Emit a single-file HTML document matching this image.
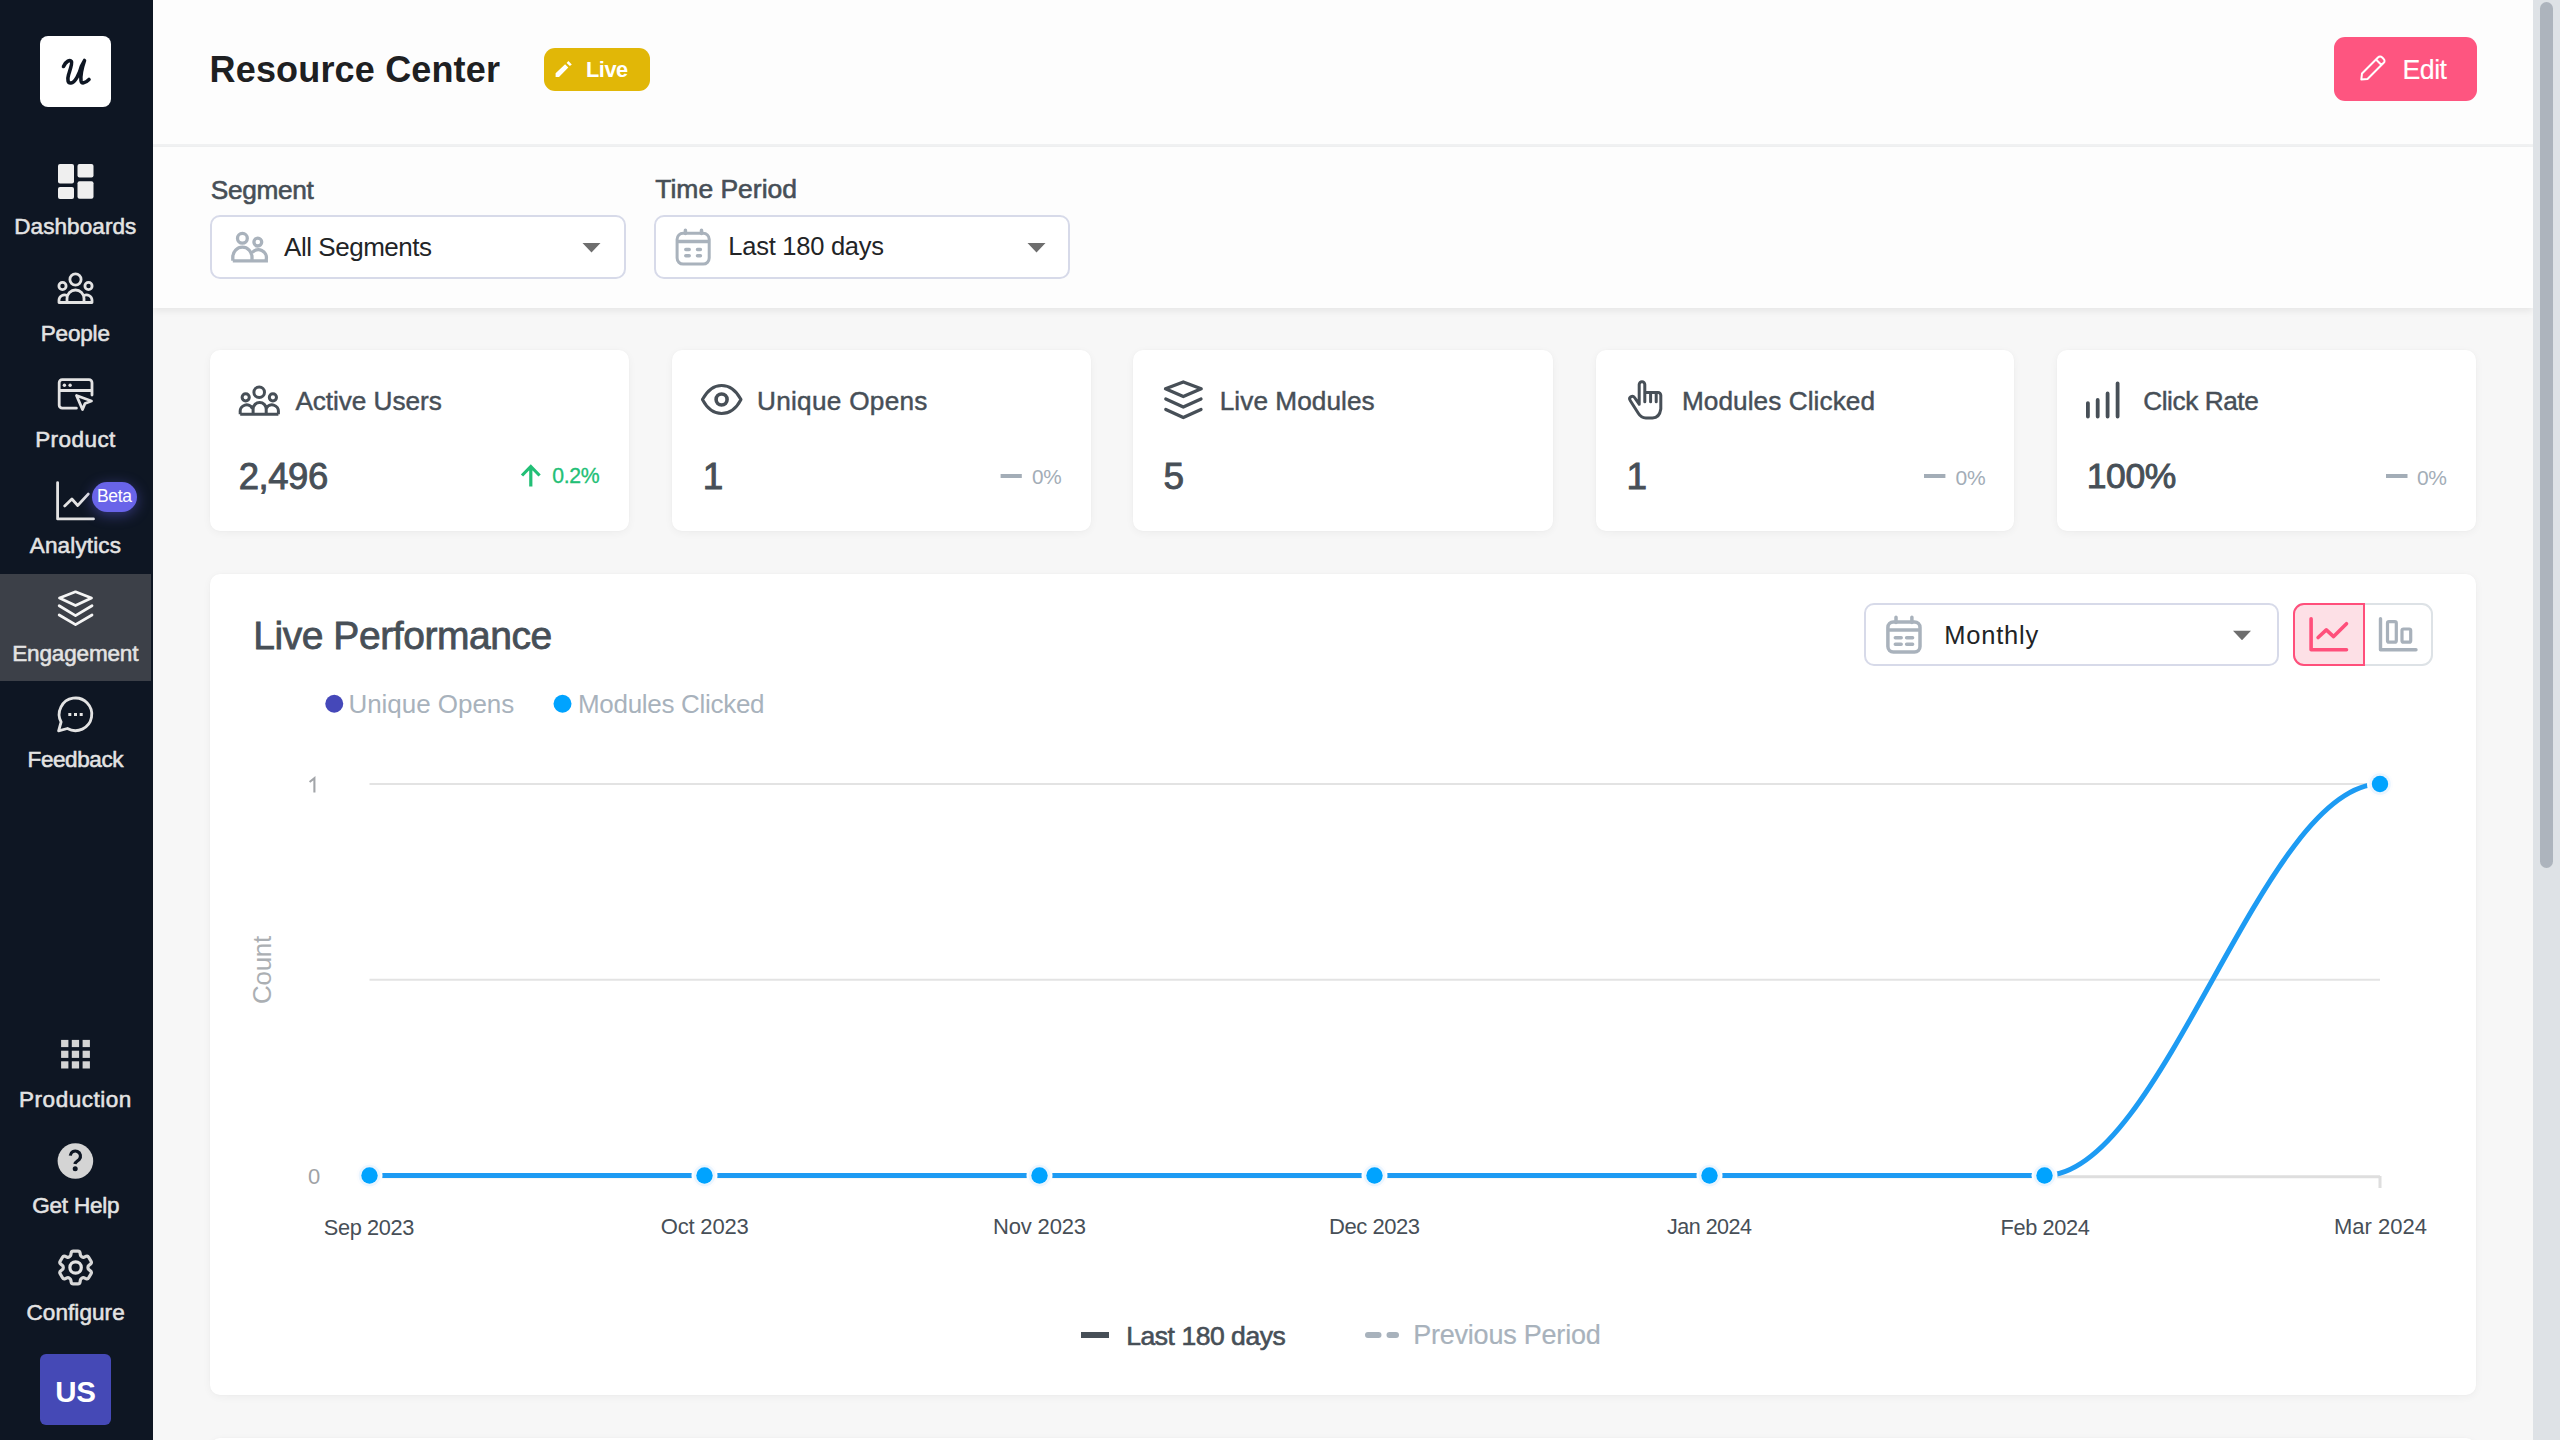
<!DOCTYPE html>
<html><head><meta charset="utf-8">
<style>
*{box-sizing:border-box;margin:0;padding:0}
html,body{width:2560px;height:1440px;overflow:hidden;background:#f7f7f7;font-family:"Liberation Sans",sans-serif}
.a{position:absolute}
.t{position:absolute;white-space:nowrap}
svg{position:absolute;overflow:visible}
.card{position:absolute;background:#fff;border-radius:10px;box-shadow:0 2px 9px rgba(0,0,0,0.045),0 0 2px rgba(0,0,0,0.03)}
.sel{position:absolute;border:2px solid #d7dae9;border-radius:10px;background:#fff}
@media (max-width:1700px){html{zoom:0.5}}
</style></head><body>
<!-- main bg regions -->
<div class="a" style="left:153px;top:0;width:2380px;height:145px;background:#fdfdfd"></div>
<div class="a" style="left:153px;top:144px;width:2380px;height:3px;background:#f1f2f3"></div>
<div class="a" style="left:153px;top:147px;width:2380px;height:161px;background:#fdfdfd;box-shadow:0 3px 7px rgba(0,0,0,0.07)"></div>

<!-- SIDEBAR -->
<div class="a" style="left:0;top:0;width:153px;height:1440px;background:#0e1623"></div>
<div class="a" style="left:0;top:574px;width:151px;height:107px;background:#3c4048"></div>
<div class="a" style="left:40px;top:35.5px;width:71px;height:71px;background:#fff;border-radius:8px"></div>
<svg width="2560" height="1440" style="left:0;top:0" viewBox="0 0 2560 1440">
 <!-- logo u -->
 <path d="M63.5 66.5 C66 61 70 59.5 71.5 61.5 C72.5 63 70 70 68.5 75 C67 80 68 83.5 71 83 C75 82.5 79.5 74 81.5 66 L84.5 60.5 C82 68 80.5 76 81 80.5 C81.5 84 85 83.5 89 79.5" fill="none" stroke="#0e1623" stroke-width="3.6" stroke-linecap="round" stroke-linejoin="round"/>
 <!-- dashboards -->
 <g fill="#efefef">
  <rect x="58" y="164" width="16" height="19.5" rx="2"/>
  <rect x="77.5" y="164" width="16" height="13.5" rx="2"/>
  <rect x="58" y="187" width="16" height="12" rx="2"/>
  <rect x="77.5" y="181.3" width="16" height="17.5" rx="2"/>
 </g>
 <g fill="none" stroke="#e3e3e3" stroke-width="2.8" stroke-linecap="round" stroke-linejoin="round">
  <!-- people -->
  <circle cx="75.5" cy="279.5" r="5.6"/>
  <circle cx="62.5" cy="286" r="3.6"/>
  <circle cx="88.5" cy="286" r="3.6"/>
  <path d="M59 302.5 H92 M59 302.5 V300 A5.5 5.5 0 0 1 67 295.5 M92 302.5 V300 A5.5 5.5 0 0 0 84 295.5 M67 302.5 V298.5 A8.5 8.5 0 0 1 84 298.5 V302.5"/>
  <!-- product -->
  <path d="M76.4 408.2 H62.2 A3 3 0 0 1 59.2 405.2 V382.7 A3 3 0 0 1 62.2 379.7 H89 A3 3 0 0 1 92 382.7 V395 M59.2 390.5 H92"/>
  <path d="M76.5 395.5 L91.5 401 L85 403.5 L82.5 409.5 Z"/>
  <!-- analytics -->
  <path d="M57.6 482.6 V518.9 H93.5 M64.7 505.9 L71.9 499 L77.7 505.5 L88.2 494.1"/>
  <!-- feedback -->
  <path d="M61.1 722 A16.3 16.3 0 1 1 67.4 728.5 L58.6 730.9 Z" />
  <!-- gear -->
  <circle cx="75.6" cy="1267.5" r="5.7" stroke-width="3.2"/>
 </g>
 <g fill="#e3e3e3">
  <circle cx="64.4" cy="385.3" r="1.7"/><circle cx="70.1" cy="385.3" r="1.7"/>
  <rect x="68.3" y="713" width="3" height="3"/><rect x="74" y="713" width="3" height="3"/><rect x="79.7" y="713" width="3" height="3"/>
 </g>
 <!-- engagement layers -->
 <g fill="none" stroke="#f5f5f5" stroke-width="2.8" stroke-linecap="round" stroke-linejoin="round">
  <path d="M59.5 598 L75.5 591.8 L91.5 598 L75.5 605.6 Z"/>
  <path d="M59.2 605.8 L75.5 615.6 L92 605.8 M59.2 615 L75.5 624.6 L92 615"/>
 </g>
 <!-- production grid -->
 <g fill="#d4d4d4">
  <rect x="61.1" y="1039.9" width="7.3" height="7.2"/><rect x="71.8" y="1039.9" width="7.3" height="7.2"/><rect x="82.6" y="1039.9" width="7.3" height="7.2"/>
  <rect x="61.1" y="1050.7" width="7.3" height="7.2"/><rect x="71.8" y="1050.7" width="7.3" height="7.2"/><rect x="82.6" y="1050.7" width="7.3" height="7.2"/>
  <rect x="61.1" y="1061.3" width="7.3" height="7.2"/><rect x="71.8" y="1061.3" width="7.3" height="7.2"/><rect x="82.6" y="1061.3" width="7.3" height="7.2"/>
 </g>
 <!-- help -->
 <circle cx="75.4" cy="1161" r="17.8" fill="#d4d4d4"/>
 <path d="M70.3 1155.6 A5.1 5.1 0 1 1 79.2 1159.5 C77 1161.2 75.3 1162 74.9 1164" fill="none" stroke="#0e1623" stroke-width="3.2" stroke-linecap="butt"/>
 <circle cx="75.2" cy="1168.8" r="2.5" fill="#0e1623"/>
 <!-- gear -->
 <g transform="translate(75.6 1267.5) scale(1.83) translate(-12 -12)">
  <path fill="none" stroke="#d8d8d8" stroke-width="1.75" stroke-linejoin="round" d="M9.594 3.94c.09-.542.56-.94 1.11-.94h2.593c.55 0 1.02.398 1.11.94l.213 1.281c.063.374.313.686.645.87.074.04.147.083.22.127.325.196.72.257 1.075.124l1.217-.456a1.125 1.125 0 0 1 1.37.49l1.296 2.247a1.125 1.125 0 0 1-.26 1.431l-1.003.827c-.293.241-.438.613-.43.992a7.723 7.723 0 0 1 0 .255c-.008.378.137.75.43.991l1.004.827c.424.35.534.955.26 1.43l-1.298 2.247a1.125 1.125 0 0 1-1.369.491l-1.217-.456c-.355-.133-.75-.072-1.076.124a6.47 6.47 0 0 1-.22.128c-.331.183-.581.495-.644.869l-.213 1.281c-.09.543-.56.94-1.11.94h-2.594c-.55 0-1.019-.398-1.11-.94l-.213-1.281c-.062-.374-.312-.686-.644-.87a6.52 6.52 0 0 1-.22-.127c-.325-.196-.72-.257-1.076-.124l-1.217.456a1.125 1.125 0 0 1-1.369-.49l-1.297-2.247a1.125 1.125 0 0 1 .26-1.431l1.004-.827c.292-.24.437-.613.43-.991a6.932 6.932 0 0 1 0-.255c.007-.38-.138-.751-.43-.992l-1.004-.827a1.125 1.125 0 0 1-.26-1.43l1.297-2.247a1.125 1.125 0 0 1 1.37-.491l1.216.456c.356.133.751.072 1.076-.124.072-.044.146-.086.22-.128.332-.183.582-.495.644-.869l.214-1.28Z"/>
 </g>
</svg>
<div class="a" style="left:92px;top:482px;width:45px;height:30px;border-radius:15px;background:#6964e9;box-shadow:0 3px 14px rgba(105,100,233,0.45)"></div>
<div class="a" style="left:40px;top:1354px;width:71px;height:71px;background:#4549b6;border-radius:6px"></div>

<!-- HEADER -->
<div class="a" style="left:544px;top:48px;width:105.5px;height:42.5px;background:#e1b707;border-radius:11px"></div>
<div class="a" style="left:2334px;top:37px;width:142.5px;height:64px;background:#fe5580;border-radius:11px"></div>

<!-- FILTERS -->
<div class="sel" style="left:210px;top:215px;width:416px;height:64px"></div>
<div class="sel" style="left:654px;top:215px;width:416px;height:64px"></div>

<!-- CARDS -->
<div class="card" style="left:210px;top:350px;width:419px;height:181px"></div>
<div class="card" style="left:672px;top:350px;width:419px;height:181px"></div>
<div class="card" style="left:1133px;top:350px;width:420px;height:181px"></div>
<div class="card" style="left:1596px;top:350px;width:418px;height:181px"></div>
<div class="card" style="left:2057px;top:350px;width:419px;height:181px"></div>

<!-- CHART CARD -->
<div class="card" style="left:210px;top:574px;width:2266px;height:821px"></div>
<div class="card" style="left:210px;top:1438px;width:2266px;height:100px"></div>
<div class="sel" style="left:1864px;top:603px;width:415px;height:63px"></div>
<div class="a" style="left:2293px;top:603px;width:140px;height:63px;border:2px solid #dde2e6;border-radius:11px;background:#fff"></div>
<div class="a" style="left:2293px;top:603px;width:71.5px;height:63px;border:2px solid #ff4f7b;border-radius:11px 0 0 11px;background:#fde0e6"></div>

<svg width="2560" height="1440" style="left:0;top:0" viewBox="0 0 2560 1440">
 <!-- header pencil (live) -->
 <path d="M555.6 76.9 L555.6 73.2 L565.1 64.3 L568.3 67.4 L559 76.9 Z M566.6 62.9 L568.4 61.1 L571.8 64.4 L569.9 66.1 Z" fill="#fff"/>
 <!-- edit pencil -->
 <path d="M2361.3 79.5 L2362 73.5 L2378.2 57.3 A2.6 2.6 0 0 1 2382 57.3 L2383.7 59 A2.6 2.6 0 0 1 2383.7 62.8 L2367.5 79 Z M2376 59.5 L2381.5 65" fill="none" stroke="#fff" stroke-width="2" stroke-linejoin="round"/>
 <!-- segment people icon -->
 <g fill="none" stroke="#a9b2bc" stroke-width="3.3">
  <circle cx="242.4" cy="238.3" r="4.9"/>
  <circle cx="257.8" cy="242.1" r="3.9"/>
  <path d="M232.8 260.8 V257 A9.6 9.8 0 0 1 252 257 V260.8 M232.8 260.8 H266.3 V259 A8 8 0 0 0 252.3 252.5"/>
 </g>
 <!-- calendar icons -->
 <g fill="none" stroke="#a9b2bc" stroke-width="3.5" stroke-linecap="round">
  <rect x="677.1" y="233.3" width="32.1" height="30.8" rx="6" stroke-width="3"/>
  <path d="M678.6 241.4 H707.7 M685.4 230.2 V233.5 M701.5 230.2 V233.5 M685.8 249.4 H689.2 M697.5 249.4 H700.4 M685.8 255.7 H689.2 M697.5 255.7 H700.4"/>
  <rect x="1887.9" y="622" width="32.1" height="30.1" rx="5.5"/>
  <path d="M1889.4 630 H1918.5 M1896 617.3 V622.5 M1911.9 617.3 V622.5 M1895.3 637.8 H1901.2 M1906.6 637.8 H1912.6 M1895.3 644.2 H1901.2 M1906.6 644.2 H1912.6"/>
 </g>
 <!-- carets -->
 <path d="M582.5 243 H600.5 L591.5 252.5 Z M1027.5 243 H1045.5 L1036.5 252.5 Z M2233 630.8 H2251 L2242 640.3 Z" fill="#6e6e6e"/>
 <!-- card icons -->
 <g fill="none" stroke="#474f57" stroke-width="3" stroke-linecap="round" stroke-linejoin="round">
  <!-- active users -->
  <circle cx="259.2" cy="392.2" r="5.3"/>
  <circle cx="245.7" cy="397.3" r="3.6"/>
  <circle cx="272.9" cy="397.3" r="3.6"/>
  <path d="M240.2 414.3 H278.4 M240.2 414.3 V412 A6.5 6.5 0 0 1 252.5 408.5 M278.4 414.3 V412 A6.5 6.5 0 0 0 266.1 408.5 M253.1 414.3 V409 A6.55 6.55 0 0 1 266.2 409 V414.3" stroke-linecap="butt"/>
  <!-- eye -->
  <path d="M702.4 399.5 C708 389 714 385.4 721.6 385.4 C729 385.4 735.5 389 741 399.5 C735.5 410 729 413.5 721.6 413.5 C714 413.5 708 410 702.4 399.5 Z"/>
  <circle cx="721.6" cy="399.5" r="5.5" stroke-width="3.6"/>
  <!-- layers -->
  <path d="M1165.5 388.8 L1183.3 382 L1201.2 388.8 L1183.3 396.5 Z" stroke-width="3.3"/>
  <path d="M1165.8 398.9 L1183.3 407.1 L1201 398.9 M1165.8 409.4 L1183.3 417.6 L1201 409.4" stroke-width="3.3"/>
  <!-- hand -->
  <path d="M1639.2 404.2 V384.5 A2.8 2.8 0 0 1 1644.8 384.5 V401.7 M1644.8 392.5 H1658 A2.8 2.8 0 0 1 1660.8 395.3 V409 C1660 414.5 1657 417.9 1652.5 417.9 H1645.8 C1642.5 417.9 1640 416 1638.3 413.2 L1630.2 400.5 A2.6 2.6 0 0 1 1634.5 397.5 L1639.2 404.2 M1650.6 392.5 V401.7 M1656.2 393 V401.7"/>
  <!-- bars -->
  <path d="M2087.9 403.1 V416.5 M2097.7 399.9 V416.5 M2107.6 393.4 V416.5 M2117.6 383.3 V416.5" stroke-width="3.8"/>
 </g>
 <!-- delta dashes -->
 <g stroke="#a3adb7" stroke-width="4">
  <path d="M1000.6 476 H1021.8 M1924 476 H1945.4 M2386 476 H2407.5"/>
 </g>
 <path d="M530.8 486.5 V467 M522 475.5 L530.8 466.5 L539.6 475.5" fill="none" stroke="#22bf76" stroke-width="3.2" stroke-linejoin="miter"/>
 <!-- toggle icons -->
 <g fill="none" stroke-linecap="round" stroke-linejoin="round">
  <path d="M2311.1 618.7 V649.8 H2346.5 M2318.1 637.5 L2326.3 629.9 L2333.6 636.6 L2346.5 623.7" stroke="#ff4f7b" stroke-width="3.6"/>
  <path d="M2380.5 618.7 V649.8 H2416" stroke="#a8b1bb" stroke-width="3.4"/>
  <rect x="2387.5" y="621.7" width="8.8" height="20.5" rx="1.5" stroke="#a8b1bb" stroke-width="3.2"/>
  <rect x="2402" y="629" width="8.7" height="13.2" rx="1.5" stroke="#a8b1bb" stroke-width="3.2"/>
 </g>
 <path d="M309.6 782 L314.4 778.2 V792.6" fill="none" stroke="#a2a5a9" stroke-width="2.1" stroke-linejoin="miter"/>
 <!-- legend dots -->
 <circle cx="334.25" cy="703.75" r="9" fill="#4548b9"/>
 <circle cx="562.5" cy="703.75" r="9" fill="#00a3ff"/>
 <!-- grid -->
 <g stroke="#e3e3e3" stroke-width="2">
  <path d="M369.5 784 H2380 M369.5 979.7 H2380"/>
 </g>
 <path d="M369.5 1176.8 H2380 M2380 1176 V1188" stroke="#dedede" stroke-width="3"/>
 <!-- data line -->
 <path d="M369.5 1175.5 H2045 C2162 1175.5 2263 784 2380 784" fill="none" stroke="#1d9bf3" stroke-width="5"/>
 <g fill="#fcfdff">
  <circle cx="369.5" cy="1175.5" r="13"/><circle cx="704.5" cy="1175.5" r="13"/><circle cx="1039.5" cy="1175.5" r="13"/><circle cx="1374.5" cy="1175.5" r="13"/><circle cx="1709.5" cy="1175.5" r="13"/><circle cx="2044.5" cy="1175.5" r="13"/><circle cx="2380" cy="784" r="13"/>
 </g>
 <g fill="#eaf5ff">
  <circle cx="369.5" cy="1175.5" r="10.8"/><circle cx="704.5" cy="1175.5" r="10.8"/><circle cx="1039.5" cy="1175.5" r="10.8"/><circle cx="1374.5" cy="1175.5" r="10.8"/><circle cx="1709.5" cy="1175.5" r="10.8"/><circle cx="2044.5" cy="1175.5" r="10.8"/><circle cx="2380" cy="784" r="10.8"/>
 </g>
 <g fill="#00a3ff">
  <circle cx="369.5" cy="1175.5" r="8.2"/><circle cx="704.5" cy="1175.5" r="8.2"/><circle cx="1039.5" cy="1175.5" r="8.2"/><circle cx="1374.5" cy="1175.5" r="8.2"/><circle cx="1709.5" cy="1175.5" r="8.2"/><circle cx="2044.5" cy="1175.5" r="8.2"/><circle cx="2380" cy="784" r="8.2"/>
 </g>
 <!-- bottom legend -->
 <path d="M1081 1335 H1109" stroke="#474f57" stroke-width="6"/>
 <path d="M1368 1335 H1378.5 M1389.5 1335 H1396" stroke="#a8b2bc" stroke-width="6" stroke-linecap="round"/>
</svg>

<div class="t" style="font-size:22.5px;line-height:22.5px;left:14.24px;top:215.95px;color:#e3e3e3;letter-spacing:0.088px;-webkit-text-stroke:0.55px #e3e3e3;">Dashboards</div>
<div class="t" style="font-size:22.5px;line-height:22.5px;left:40.73px;top:322.65px;color:#e3e3e3;letter-spacing:-0.162px;-webkit-text-stroke:0.55px #e3e3e3;">People</div>
<div class="t" style="font-size:22.5px;line-height:22.5px;left:35.14px;top:428.95px;color:#e3e3e3;letter-spacing:0.442px;-webkit-text-stroke:0.55px #e3e3e3;">Product</div>
<div class="t" style="font-size:22.5px;line-height:22.5px;left:29.77px;top:535.45px;color:#e3e3e3;letter-spacing:0.150px;-webkit-text-stroke:0.55px #e3e3e3;">Analytics</div>
<div class="t" style="font-size:22.5px;line-height:22.5px;left:12.28px;top:642.70px;color:#e3e3e3;letter-spacing:-0.158px;-webkit-text-stroke:0.55px #e3e3e3;">Engagement</div>
<div class="t" style="font-size:22.5px;line-height:22.5px;left:27.57px;top:748.75px;color:#e3e3e3;letter-spacing:-0.407px;-webkit-text-stroke:0.55px #e3e3e3;">Feedback</div>
<div class="t" style="font-size:22.5px;line-height:22.5px;left:19.09px;top:1088.95px;color:#e3e3e3;letter-spacing:0.522px;-webkit-text-stroke:0.55px #e3e3e3;">Production</div>
<div class="t" style="font-size:22.5px;line-height:22.5px;left:32.27px;top:1195.45px;color:#e3e3e3;letter-spacing:-0.207px;-webkit-text-stroke:0.55px #e3e3e3;">Get Help</div>
<div class="t" style="font-size:22.5px;line-height:22.5px;left:26.47px;top:1301.95px;color:#e3e3e3;letter-spacing:0.081px;-webkit-text-stroke:0.55px #e3e3e3;">Configure</div>
<div class="t" style="font-size:17.5px;line-height:17.5px;left:97.00px;top:488.19px;color:#ffffff;letter-spacing:-0.367px;">Beta</div>
<div class="t" style="font-size:29.5px;line-height:29.5px;left:55.30px;top:1376.83px;color:#ffffff;font-weight:bold;letter-spacing:-0.280px;">US</div>
<div class="t" style="font-size:36px;line-height:36px;left:209.60px;top:52.03px;color:#1e2022;font-weight:bold;letter-spacing:0.162px;">Resource Center</div>
<div class="t" style="font-size:21.75px;line-height:21.75px;left:585.98px;top:58.59px;color:#ffffff;font-weight:bold;letter-spacing:-0.430px;">Live</div>
<div class="t" style="font-size:26.75px;line-height:26.75px;left:2402.38px;top:56.86px;color:#ffffff;letter-spacing:-0.475px;-webkit-text-stroke:0.15px #ffffff;">Edit</div>
<div class="t" style="font-size:26.25px;line-height:26.25px;left:210.87px;top:176.53px;color:#474f57;letter-spacing:-0.359px;-webkit-text-stroke:0.6px #474f57;">Segment</div>
<div class="t" style="font-size:26.5px;line-height:26.5px;left:655.30px;top:176.32px;color:#474f57;letter-spacing:-0.021px;-webkit-text-stroke:0.6px #474f57;">Time Period</div>
<div class="t" style="font-size:26px;line-height:26px;left:284.02px;top:233.89px;color:#222426;letter-spacing:-0.462px;">All Segments</div>
<div class="t" style="font-size:25.5px;line-height:25.5px;left:728.30px;top:234.16px;color:#222426;letter-spacing:-0.254px;">Last 180 days</div>
<div class="t" style="font-size:25.5px;line-height:25.5px;left:1944.30px;top:623.41px;color:#222426;letter-spacing:0.767px;">Monthly</div>
<div class="t" style="font-size:26.2px;line-height:26.2px;left:295.40px;top:387.52px;color:#474f57;letter-spacing:-0.055px;-webkit-text-stroke:0.45px #474f57;">Active Users</div>
<div class="t" style="font-size:26.2px;line-height:26.2px;left:757.02px;top:387.52px;color:#474f57;letter-spacing:0.269px;-webkit-text-stroke:0.45px #474f57;">Unique Opens</div>
<div class="t" style="font-size:26.2px;line-height:26.2px;left:1219.72px;top:387.52px;color:#474f57;letter-spacing:0.061px;-webkit-text-stroke:0.45px #474f57;">Live Modules</div>
<div class="t" style="font-size:26.2px;line-height:26.2px;left:1681.92px;top:387.52px;color:#474f57;letter-spacing:0.071px;-webkit-text-stroke:0.45px #474f57;">Modules Clicked</div>
<div class="t" style="font-size:26.2px;line-height:26.2px;left:2143.22px;top:387.52px;color:#474f57;letter-spacing:-0.425px;-webkit-text-stroke:0.45px #474f57;">Click Rate</div>
<div class="t" style="font-size:36.5px;line-height:36.5px;left:238.75px;top:458.60px;color:#474f57;letter-spacing:-0.469px;-webkit-text-stroke:0.9px #474f57;">2,496</div>
<div class="t" style="font-size:37px;line-height:37px;left:702.85px;top:458.18px;color:#474f57;-webkit-text-stroke:0.9px #474f57;">1</div>
<div class="t" style="font-size:37px;line-height:37px;left:1163.45px;top:458.18px;color:#474f57;-webkit-text-stroke:0.9px #474f57;">5</div>
<div class="t" style="font-size:37px;line-height:37px;left:1626.45px;top:458.18px;color:#474f57;-webkit-text-stroke:0.9px #474f57;">1</div>
<div class="t" style="font-size:35.5px;line-height:35.5px;left:2086.73px;top:459.45px;color:#474f57;letter-spacing:-0.360px;-webkit-text-stroke:0.9px #474f57;">100%</div>
<div class="t" style="font-size:20.75px;line-height:20.75px;left:1032.00px;top:466.84px;color:#a3adb7;letter-spacing:-0.320px;">0%</div>
<div class="t" style="font-size:21.0px;line-height:21.0px;left:1955.50px;top:466.62px;color:#a3adb7;letter-spacing:-0.295px;">0%</div>
<div class="t" style="font-size:21.0px;line-height:21.0px;left:2417.00px;top:466.62px;color:#a3adb7;letter-spacing:-0.395px;">0%</div>
<div class="t" style="font-size:21.25px;line-height:21.25px;left:552.30px;top:466.26px;color:#22bf76;letter-spacing:-0.325px;-webkit-text-stroke:0.3px #22bf76;">0.2%</div>
<div class="t" style="font-size:39px;line-height:39px;left:253.15px;top:615.74px;color:#474f57;letter-spacing:-0.432px;-webkit-text-stroke:0.8px #474f57;">Live Performance</div>
<div class="t" style="font-size:26px;line-height:26px;left:348.45px;top:690.99px;color:#a8b2bc;letter-spacing:-0.038px;">Unique Opens</div>
<div class="t" style="font-size:26px;line-height:26px;left:578.00px;top:690.99px;color:#a8b2bc;letter-spacing:-0.304px;">Modules Clicked</div>
<div class="t" style="font-size:22px;line-height:22px;left:308.00px;top:1166.38px;color:#9fa2a6;">0</div>
<div class="t" style="font-size:21.75px;line-height:21.75px;left:323.73px;top:1216.59px;color:#474f57;letter-spacing:-0.346px;">Sep 2023</div>
<div class="t" style="font-size:22px;line-height:22px;left:660.75px;top:1216.38px;color:#474f57;letter-spacing:-0.179px;">Oct 2023</div>
<div class="t" style="font-size:22px;line-height:22px;left:992.96px;top:1216.38px;color:#474f57;letter-spacing:-0.152px;">Nov 2023</div>
<div class="t" style="font-size:22px;line-height:22px;left:1329.00px;top:1216.38px;color:#474f57;letter-spacing:-0.446px;">Dec 2023</div>
<div class="t" style="font-size:21.5px;line-height:21.5px;left:1667.00px;top:1216.80px;color:#474f57;letter-spacing:-0.500px;">Jan 2024</div>
<div class="t" style="font-size:21.75px;line-height:21.75px;left:2000.60px;top:1216.59px;color:#474f57;letter-spacing:-0.382px;">Feb 2024</div>
<div class="t" style="font-size:22px;line-height:22px;left:2334.00px;top:1216.38px;color:#474f57;">Mar 2024</div>
<div class="t" style="font-size:26.5px;line-height:26.5px;left:1126.24px;top:1322.57px;color:#474f57;letter-spacing:-0.460px;-webkit-text-stroke:0.6px #474f57;">Last 180 days</div>
<div class="t" style="font-size:27px;line-height:27px;left:1413.21px;top:1322.14px;color:#a8b2bc;letter-spacing:-0.219px;-webkit-text-stroke:0.2px #a8b2bc;">Previous Period</div>
<div class="t" style="font-size:26px;line-height:26px;color:#abafb3;letter-spacing:-0.294px;left:162.3px;top:956.5px;width:200px;text-align:center;transform:rotate(-90deg)">Count</div>


<!-- scrollbar -->
<div class="a" style="left:2533px;top:0;width:27px;height:1440px;background:#dee2e6"></div>
<div class="a" style="left:2540px;top:2px;width:13px;height:866px;background:#adb4bd;border-radius:7px"></div>
</body></html>
